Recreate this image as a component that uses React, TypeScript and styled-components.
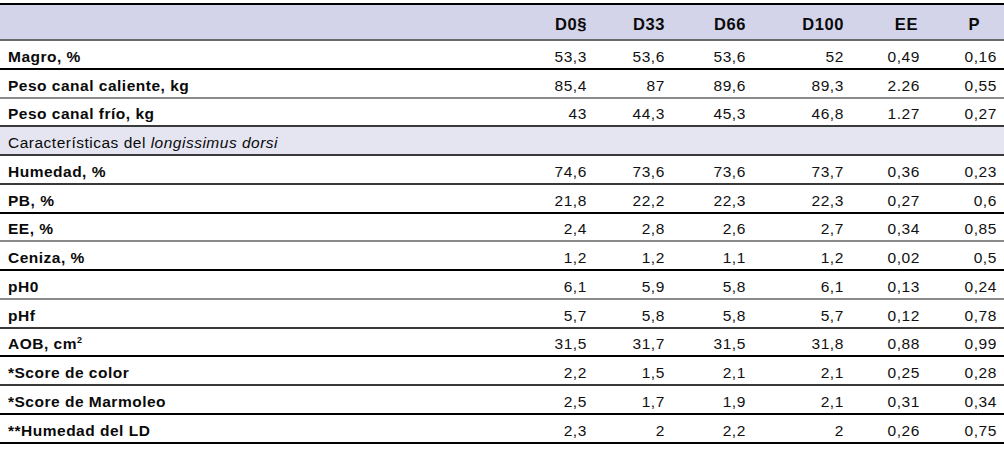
import React from "react";
import styled, { createGlobalStyle } from "styled-components";

const Global = createGlobalStyle`
  html, body { margin: 0; padding: 0; background: #ffffff; }
  body { font-family: "Liberation Sans", Arial, sans-serif; color: #111; }
`;

const Page = styled.div`
  padding-top: 3px;
  width: 1004px;
`;

const Table = styled.div`
  display: flex;
  flex-direction: column;
  border-top: 2px solid #000;
`;

const cols = "517px 79px 78px 78px 100px 74px 78px";

type Line = "strong" | "mid" | "soft";
const lineColor: Record<Line, string> = {
  strong: "#000000",
  mid: "#3a3a3a",
  soft: "#8a8a8a",
};

const HeadRow = styled.div`
  display: grid;
  grid-template-columns: ${cols};
  height: 34px;
  background: #d3d3e9;
  border-bottom: 2px solid #6a6a6a;
  align-items: center;
`;

const HeadCell = styled.div<{ $pad: number }>`
  font-family: "Liberation Sans", Arial, sans-serif;
  font-weight: 700;
  font-size: 16.5px;
  letter-spacing: 0.6px;
  text-align: right;
  padding-right: ${(p) => p.$pad}px;
  padding-top: 4px;
  color: #0a0a0a;
`;

const Row = styled.div<{ $line: Line; $section?: boolean }>`
  display: grid;
  grid-template-columns: ${cols};
  height: 26.75px;
  background: ${(p) => (p.$section ? "#e5e5f2" : "#ffffff")};
  border-bottom: 2px solid ${(p) => lineColor[p.$line]};
  align-items: center;
`;

const Label = styled.div`
  font-family: "Liberation Sans", Arial, sans-serif;
  font-weight: 700;
  font-size: 15.5px;
  letter-spacing: 0.5px;
  padding-left: 8px;
  padding-top: 5px;
  white-space: nowrap;
  color: #0a0a0a;
`;

const SectionLabel = styled.div`
  grid-column: 1 / -1;
  font-family: "Liberation Sans", Arial, sans-serif;
  font-size: 15.5px;
  letter-spacing: 0.5px;
  padding-left: 8px;
  padding-top: 5px;
  white-space: nowrap;
  color: #0a0a0a;
`;

const Value = styled.div<{ $pad: number }>`
  font-family: "Liberation Sans", Arial, sans-serif;
  font-size: 15.5px;
  letter-spacing: 0.6px;
  text-align: right;
  padding-right: ${(p) => p.$pad}px;
  padding-top: 5px;
  color: #111;
`;

const Sup = styled.sup`
  font-size: 9px;
  vertical-align: 6px;
  line-height: 0;
  letter-spacing: 0;
`;

const pads = [9, 9, 6, 8, 6, 7];
const headPads = [9, 9, 6, 8, 8, 24];

type DataRow = { label: React.ReactNode; values: string[]; line: Line };

const top: DataRow[] = [
  { label: "Magro, %", values: ["53,3", "53,6", "53,6", "52", "0,49", "0,16"], line: "strong" },
  { label: "Peso canal caliente, kg", values: ["85,4", "87", "89,6", "89,3", "2.26", "0,55"], line: "soft" },
  { label: "Peso canal frío, kg", values: ["43", "44,3", "45,3", "46,8", "1.27", "0,27"], line: "mid" },
];

const bottom: DataRow[] = [
  { label: "Humedad, %", values: ["74,6", "73,6", "73,6", "73,7", "0,36", "0,23"], line: "mid" },
  { label: "PB, %", values: ["21,8", "22,2", "22,3", "22,3", "0,27", "0,6"], line: "strong" },
  { label: "EE, %", values: ["2,4", "2,8", "2,6", "2,7", "0,34", "0,85"], line: "soft" },
  { label: "Ceniza, %", values: ["1,2", "1,2", "1,1", "1,2", "0,02", "0,5"], line: "strong" },
  { label: "pH0", values: ["6,1", "5,9", "5,8", "6,1", "0,13", "0,24"], line: "soft" },
  { label: "pHf", values: ["5,7", "5,8", "5,8", "5,7", "0,12", "0,78"], line: "mid" },
  {
    label: (
      <>
        AOB, cm<Sup>2</Sup>
      </>
    ),
    values: ["31,5", "31,7", "31,5", "31,8", "0,88", "0,99"],
    line: "strong",
  },
  { label: "*Score de color", values: ["2,2", "1,5", "2,1", "2,1", "0,25", "0,28"], line: "mid" },
  { label: "*Score de Marmoleo", values: ["2,5", "1,7", "1,9", "2,1", "0,31", "0,34"], line: "strong" },
  { label: "**Humedad del LD", values: ["2,3", "2", "2,2", "2", "0,26", "0,75"], line: "strong" },
];

const headers = ["D0§", "D33", "D66", "D100", "EE", "P"];

function renderRow(r: DataRow, i: number) {
  return (
    <Row key={i} $line={r.line}>
      <Label>{r.label}</Label>
      {r.values.map((v, j) => (
        <Value key={j} $pad={pads[j]}>
          {v}
        </Value>
      ))}
    </Row>
  );
}

export default function App() {
  return (
    <Page>
      <Global />
      <Table>
        <HeadRow>
          <div />
          {headers.map((h, i) => (
            <HeadCell key={i} $pad={headPads[i]}>
              {h}
            </HeadCell>
          ))}
        </HeadRow>
        {top.map(renderRow)}
        <Row $line="mid" $section>
          <SectionLabel>
            Características del <i>longissimus dorsi</i>
          </SectionLabel>
        </Row>
        {bottom.map(renderRow)}
      </Table>
    </Page>
  );
}
